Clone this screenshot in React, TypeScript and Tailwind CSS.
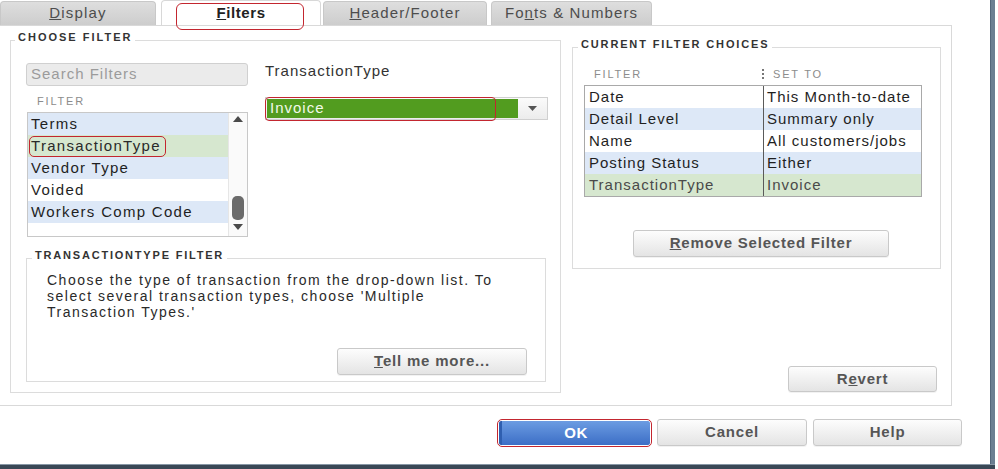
import React from "react";

function UpTri() {
  return (
    <svg width="12" height="8" viewBox="0 0 12 8">
      <path d="M1 7 L6 1 L11 7 Z" fill="#4a4a4a" />
    </svg>
  );
}
function DownTri() {
  return (
    <svg width="12" height="8" viewBox="0 0 12 8">
      <path d="M1 1 L6 7 L11 1 Z" fill="#4a4a4a" />
    </svg>
  );
}

function Btn({ children, className }: { children: React.ReactNode; className: string }) {
  return (
    <div
      className={`flex items-center justify-center rounded-[3px] border border-[#c9c9c9] bg-linear-to-b from-[#fdfdfd] to-[#e4e4e4] text-[15px] font-bold tracking-[0.8px] text-[#565656] shadow-[0_1px_0_rgba(0,0,0,0.05)] ${className}`}
    >
      {children}
    </div>
  );
}

const listRows = [
  { t: "Terms", bg: "bg-[#dde8f7]" },
  { t: "TransactionType", bg: "bg-[#d6e7cf]", sel: true },
  { t: "Vendor Type", bg: "bg-[#dde8f7]" },
  { t: "Voided", bg: "bg-white" },
  { t: "Workers Comp Code", bg: "bg-[#dde8f7]" },
];

const tableRows = [
  { a: "Date", b: "This Month-to-date", bg: "bg-white", c: "text-[#1f1f1f]" },
  { a: "Detail Level", b: "Summary only", bg: "bg-[#dde8f7]", c: "text-[#1f1f1f]" },
  { a: "Name", b: "All customers/jobs", bg: "bg-white", c: "text-[#1f1f1f]" },
  { a: "Posting Status", b: "Either", bg: "bg-[#dde8f7]", c: "text-[#1f1f1f]" },
  { a: "TransactionType", b: "Invoice", bg: "bg-[#d6e7cf]", c: "text-[#4a4a4a]" },
];

export default function App() {
  return (
    <div className="w-[998px] h-[469px] bg-white flex overflow-hidden font-['Liberation_Sans',Arial,sans-serif] text-[#1f1f1f]">
      <div className="w-[995px] flex flex-col">
        <div className="flex h-[464px]">
          <div className="w-[990px] flex flex-col">
            {/* Tabs */}
            <div className="h-[25px] flex items-end relative z-10">
              <div className="w-[156px] h-[24px] rounded-t-[4px] bg-linear-to-b from-[#dedede] to-[#cdcdcd] border border-b-0 border-[#c8c8c8] flex items-center justify-center text-[15px] tracking-[1.2px] text-[#4d4d4d]">
                <span>
                  <u>D</u>isplay
                </span>
              </div>
              <div className="ml-[5px] w-[160px] h-[25px] relative bg-white border border-b-0 border-[#d8d8d8] rounded-t-[4px] flex items-center justify-center text-[15px] font-bold tracking-[0.6px] text-[#222]">
                <span>
                  <u>F</u>ilters
                </span>
                <div className="absolute left-[14px] top-[2px] w-[128px] h-[27px] border-[1.5px] border-[#c3262f] rounded-[6px]" />
              </div>
              <div className="ml-[2px] w-[164px] h-[24px] rounded-t-[4px] bg-linear-to-b from-[#dedede] to-[#cdcdcd] border border-b-0 border-[#c8c8c8] flex items-center justify-center text-[15px] tracking-[1.1px] text-[#4d4d4d]">
                <span>
                  <u>H</u>eader/Footer
                </span>
              </div>
              <div className="ml-[4px] w-[161px] h-[24px] rounded-t-[4px] bg-linear-to-b from-[#dedede] to-[#cdcdcd] border border-b-0 border-[#c8c8c8] flex items-center justify-center text-[15px] tracking-[1.1px] text-[#4d4d4d]">
                <span>
                  Fo<u>n</u>ts &amp; Numbers
                </span>
              </div>
            </div>

            {/* Panel */}
            <div className="w-[952px] h-[381px] border-t border-r border-b border-[#d9d9d9] flex items-start pl-[10px] pt-[5px] gap-[11px]">
              {/* Choose filter */}
              <fieldset className="w-[551px] h-[362px] border border-[#dcdcdc]">
                <legend className="ml-[4px] px-[3px] pb-[6px] text-[11px] leading-[12px] font-bold tracking-[2px] text-[#333]">
                  CHOOSE FILTER
                </legend>
                <div className="pl-[15px] pt-[14px]">
                  <div className="flex gap-[17px]">
                    <div className="w-[222px] flex flex-col">
                      <div className="h-[23px] w-[222px] bg-[#ebebeb] border border-[#d0d0d0] rounded-[3px] flex items-center pl-[4px] text-[15px] tracking-[1px] text-[#9b9b9b]">
                        Search Filters
                      </div>
                      <div className="mt-[9px] h-[12px] leading-[12px] text-[11px] tracking-[1.8px] text-[#8c8c8c] pl-[11px]">
                        FILTER
                      </div>
                      <div className="mt-[5px] ml-[1px] w-[221px] h-[125px] border border-[#c8c8c8] flex">
                        <div className="flex-1 flex flex-col">
                          {listRows.map((r) => (
                            <div
                              key={r.t}
                              className={`h-[22px] flex items-center pl-[3px] text-[15px] tracking-[1.3px] ${r.bg}`}
                            >
                              {r.sel ? (
                                <span className="-ml-[2px] h-[21px] flex items-center px-[1px] pr-[4px] border-[1.5px] border-[#c3262f] rounded-[5px] text-[#2a2a2a]">
                                  {r.t}
                                </span>
                              ) : (
                                <span>{r.t}</span>
                              )}
                            </div>
                          ))}
                        </div>
                        <div className="w-[19px] border-l border-[#e6e6e6] bg-[#fafafa] flex flex-col items-center">
                          <div className="mt-[2px]">
                            <UpTri />
                          </div>
                          <div className="flex-1" />
                          <div className="w-[12px] h-[24px] rounded-[5px] bg-[#6b6b6b]" />
                          <div className="mt-[3px] mb-[5px]">
                            <DownTri />
                          </div>
                        </div>
                      </div>
                    </div>
                    <div className="flex flex-col">
                      <div className="text-[15px] leading-[15px] tracking-[1px] text-[#333]">TransactionType</div>
                      <div className="relative mt-[19px] w-[283px] h-[23px] border border-[#d0d0d0] bg-linear-to-b from-[#fbfbfb] to-[#ececec] flex p-[1px]">
                        <div className="w-[251px] bg-[#529c1f] flex items-center pl-[3px] text-[15px] tracking-[1px] text-[#f2faea]">
                          Invoice
                        </div>
                        <div className="flex-1 flex items-center justify-center">
                          <svg width="9" height="5" viewBox="0 0 9 5">
                            <path d="M0 0 L9 0 L4.5 5 Z" fill="#555" />
                          </svg>
                        </div>
                        <div className="absolute left-[-1px] top-[-1px] w-[231px] h-[24px] border-[1.5px] border-[#c3262f] rounded-[4px]" />
                      </div>
                    </div>
                  </div>

                  <fieldset className="mt-[12px] w-[520px] h-[133px] border border-[#dcdcdc]">
                    <legend className="ml-[5px] px-[3px] pb-[6px] text-[11px] leading-[12px] font-bold tracking-[1.8px] text-[#333]">
                      TRANSACTIONTYPE FILTER
                    </legend>
                    <div className="pl-[20px] pt-[5px] text-[14px] leading-[16px] tracking-[1.5px] text-[#2a2a2a]">
                      Choose the type of transaction from the drop-down list. To
                      <br />
                      select several transaction types, choose 'Multiple
                      <br />
                      Transaction Types.'
                    </div>
                    <Btn className="mt-[28px] ml-[310px] w-[190px] h-[27px]">
                      <span>
                        <u>T</u>ell me more...
                      </span>
                    </Btn>
                  </fieldset>
                </div>
              </fieldset>

              {/* Right column */}
              <div className="w-[369px] h-[362px] flex flex-col">
                <fieldset className="mt-[7px] w-[369px] h-[231px] border border-[#dcdcdc] pt-[12px]">
                  <legend className="ml-[5px] px-[3px] pb-[6px] text-[11px] leading-[12px] font-bold tracking-[1.85px] text-[#333]">
                    CURRENT FILTER CHOICES
                  </legend>
                  <div className="ml-[11px] w-[338px] h-[12px] flex items-center text-[11px] leading-[12px] tracking-[1.8px] text-[#8c8c8c]">
                    <div className="w-[178px] pl-[10px]">FILTER</div>
                    <div className="flex items-center">
                      <span className="h-[10px] border-l-2 border-dotted border-[#777]" />
                      <span className="ml-[9px]">SET TO</span>
                    </div>
                  </div>
                  <div className="mt-[5px] ml-[11px] w-[338px] border border-[#a9a9a9] flex flex-col">
                    {tableRows.map((r) => (
                      <div key={r.a} className={`h-[22px] flex text-[15px] tracking-[1px] ${r.bg} ${r.c}`}>
                        <div className="w-[178px] pl-[4px] flex items-center">{r.a}</div>
                        <div className="flex-1 border-l border-[#5a5a5a] pl-[3px] flex items-center">{r.b}</div>
                      </div>
                    ))}
                  </div>
                  <Btn className="mt-[33px] ml-[60px] w-[256px] h-[27px]">
                    <span>
                      <u>R</u>emove Selected Filter
                    </span>
                  </Btn>
                </fieldset>
                <div className="flex-1" />
                <Btn className="self-end mr-[4px] mb-[1px] w-[149px] h-[26px]">
                  <span>
                    R<u>e</u>vert
                  </span>
                </Btn>
              </div>
            </div>

            {/* Bottom buttons */}
            <div className="flex-1 flex items-start pl-[497px] pt-[13px]">
              <div className="w-[155px] h-[28px] border-[1.5px] border-[#c3262f] rounded-[5px] p-[1px] flex">
                <div className="flex-1 rounded-[2px] border-l-[3px] border-[#2f5fb0] bg-linear-to-b from-[#6c9ce2] to-[#3c6ec6] flex items-center justify-center text-[15px] font-bold tracking-[0.6px] text-white">
                  OK
                </div>
              </div>
              <Btn className="ml-[5px] w-[150px] h-[27px]">Cancel</Btn>
              <Btn className="ml-[6px] w-[149px] h-[27px]">Help</Btn>
            </div>
          </div>
          <div className="w-[5px] bg-[#6b7f92] border-l border-[#53667a]" />
        </div>
        <div className="h-[5px] bg-[#3a4856] border-t border-[#8797a5]" />
      </div>
    </div>
  );
}
